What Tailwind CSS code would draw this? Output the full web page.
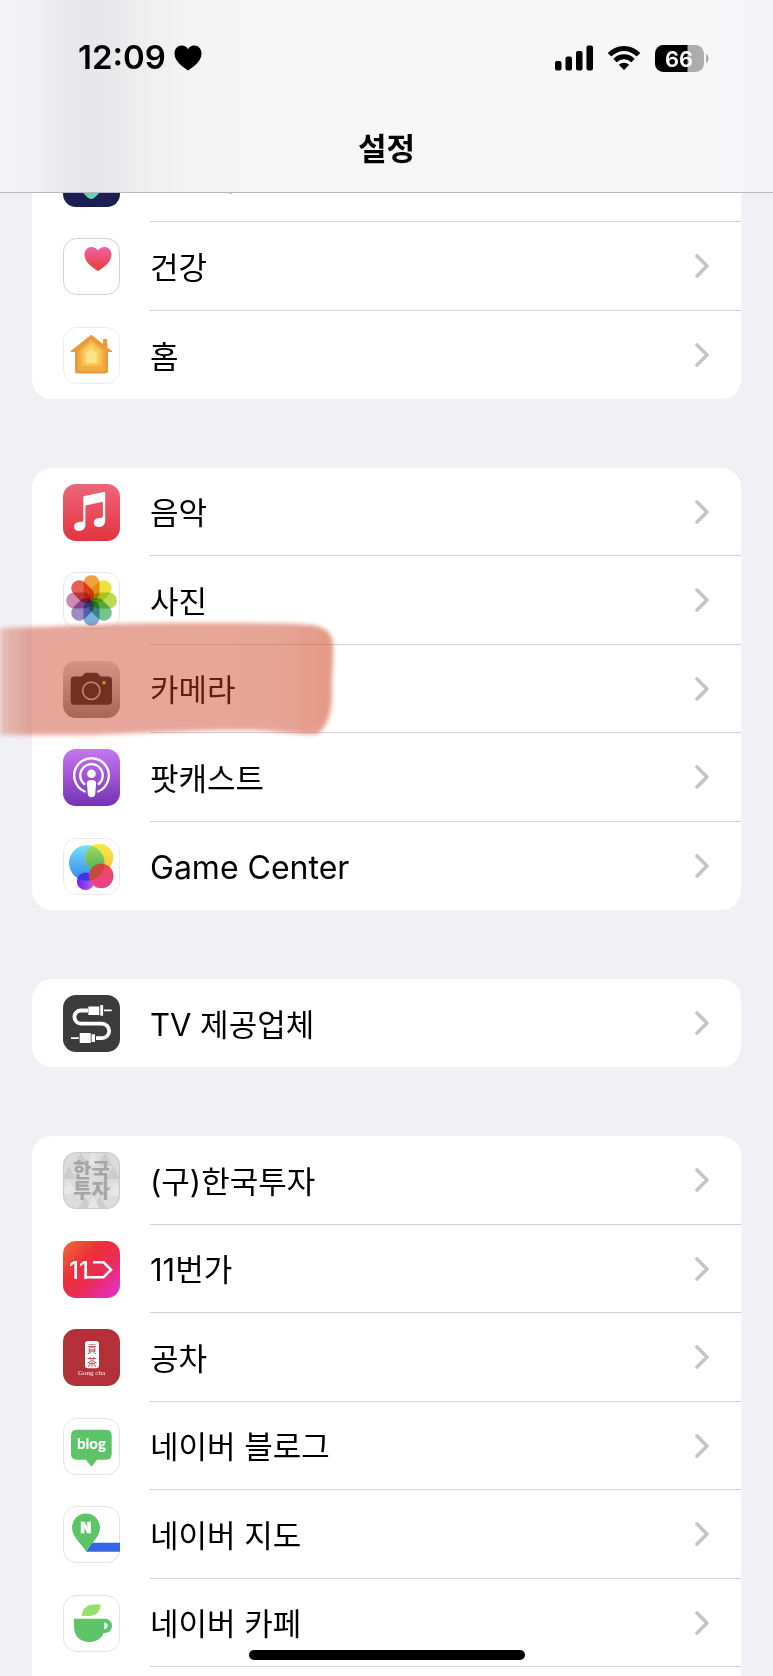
<!DOCTYPE html>
<html lang="ko">
<head>
  <meta charset="UTF-8" />
  <meta name="viewport" content="width=device-width, initial-scale=1" />
  <title>설정</title>
  <script src="https://cdn.jsdelivr.net/npm/@tailwindcss/browser@4"></script>
</head>

<body class="relative flex h-screen flex-col overflow-hidden bg-[#f0f0f5] font-[Inter,'Noto_Sans_CJK_KR',sans-serif] text-[31px] text-black">

  <!-- Shared symbols -->
  <svg class="hidden">
    <symbol id="chevron" viewBox="0 0 14 24">
      <path d="M2 2l10 10L2 22" fill="none" stroke="#c5c5c7" stroke-width="3.6" stroke-linecap="round" stroke-linejoin="round" />
    </symbol>
  </svg>

  <!-- Header -->
  <header class="flex h-[193px] shrink-0 flex-col border-b border-[#b9b9bd] bg-[#f7f7f8] bg-[linear-gradient(to_right,#f4f4f7_0,#f2f2f5_30px,#e9e9eb_70px,#e7e7e9_100px,#eeeeef_140px,#f3f3f4_180px,#f6f6f6_260px,#f7f7f7_700px,#f4f4f8_773px)]">
    <div class="flex h-[116px] items-center justify-between pr-16 pl-[78px]">
      <div class="flex items-center gap-2 text-[33px] font-semibold">
        <span>12:09</span>
        <svg class="h-[26px] w-[28px]" viewBox="0 0 28 26"><path d="M14 25.500C9 22 .5 16.500 .5 8.500 .5 3.800 3.800 .6 7.700 .6c2.700 0 5 1.400 6.300 3.600C15.300 2 17.600 .6 20.300 .6c3.900 0 7.200 3.200 7.200 7.900 0 8-8.500 13.500-13.500 17z" /></svg>
      </div>
      <div class="flex items-center">
        <svg class="mr-[13px] h-[26px] w-[39px]" viewBox="0 0 39 26">
          <rect x="0" y="16" width="6.500" height="9.500" rx="2" />
          <rect x="10.500" y="11.500" width="6.500" height="14" rx="2" />
          <rect x="21" y="6" width="6.500" height="19.500" rx="2" />
          <rect x="31.500" y=".5" width="6.500" height="25" rx="2" />
        </svg>
        <svg class="mr-[14px] h-[26px] w-[34px]" viewBox="0 0 34 26">
          <path d="M2.500 9.700C10.800 1.300 23.200 1.300 31.500 9.700M8 15.500c5.200-5 12.800-5 18 0" fill="none" stroke="#000" stroke-width="5" />
          <path d="M17 25l-5.200-5.200c2.800-2.700 7.600-2.700 10.400 0z" />
        </svg>
        <svg class="h-[27px] w-[54px]" viewBox="0 0 54 27">
          <clipPath id="batt"><rect width="49" height="27" rx="8.500" /></clipPath>
          <g clip-path="url(#batt)"><rect width="49" height="27" fill="#adadad" /><rect width="32.500" height="27" /></g>
          <path d="M51 9c3.500 1 3.500 8 0 9z" fill="#adadad" />
          <text x="24" y="21.500" text-anchor="middle" font-size="22" font-weight="600" fill="#fff">66</text>
        </svg>
      </div>
    </div>
    <h1 class="text-center text-[31px] leading-[66px] font-semibold">설정</h1>
  </header>

  <!-- Settings list -->
  <main class="flex min-h-0 flex-1 flex-col gap-[69px] overflow-hidden px-8">

    <ul class="-mt-[59px] shrink-0 rounded-[20px] bg-white">
      <li class="odd:h-[88px] even:h-[89px]">
        <a href="#" class="flex h-full items-center pl-[31px]">
          <svg class="size-[57px] shrink-0" viewBox="0 0 57 57">
            <defs><linearGradient id="sc" x1="0" y1="0" x2="1" y2="1"><stop offset="0" stop-color="#3fa0d8" /><stop offset="1" stop-color="#6fdc9c" /></linearGradient></defs>
            <rect width="57" height="57" rx="13" fill="#1d1e55" />
            <rect x="16" y="21" width="25" height="25" rx="5" transform="rotate(45 28.500 33)" fill="url(#sc)" />
          </svg>
          <span class="ml-[30px] flex h-full flex-1 items-center justify-between border-b border-[#d3d3d6] pr-8"><span class="pt-1">단축어</span> <svg class="h-6 w-[14px]"><use href="#chevron" /></svg></span>
        </a>
      </li>
      <li class="odd:h-[88px] even:h-[89px]">
        <a href="#" class="flex h-full items-center pl-[31px]">
          <svg class="size-[57px] shrink-0" viewBox="0 0 57 57">
            <defs><linearGradient id="ht" x1="0" y1="0" x2="0" y2="1"><stop offset="0" stop-color="#ec62ab" /><stop offset="1" stop-color="#ea3c30" /></linearGradient></defs>
            <rect x=".5" y=".5" width="56" height="56" rx="13" fill="#fff" stroke="#d2d2d4" />
            <path d="M35 33C31 30.500 21.500 24.500 21.500 16.700c0-4.400 3-7.700 6.900-7.700 2.800 0 5.200 1.300 6.600 3.500C36.400 10.300 38.800 9 41.600 9c3.900 0 6.900 3.300 6.900 7.700C48.500 24.500 39 30.500 35 33z" fill="url(#ht)" />
          </svg>
          <span class="ml-[30px] flex h-full flex-1 items-center justify-between border-b border-[#d3d3d6] pr-8"><span class="pt-1">건강</span> <svg class="h-6 w-[14px]"><use href="#chevron" /></svg></span>
        </a>
      </li>
      <li class="odd:h-[88px] even:h-[89px]">
        <a href="#" class="flex h-full items-center pl-[31px]">
          <svg class="size-[57px] shrink-0" viewBox="0 0 57 57">
            <rect x=".5" y=".5" width="56" height="56" rx="13" fill="#fff" stroke="#ededf0" />
            <path d="M28.300 7.700L40 17v-4.200q0-.8.800-.8h2.700q.8 0 .8.800v7.600l4.700 3.700q.8.900-.3.900H45v19.500q0 2-2 2H14q-2 0-2-2V25H8q-1.100 0-.3-.9z" fill="#ea9a3c" />
            <path d="M28.300 12.500L42 23.500v19q0 1.500-1.500 1.500h-24q-1.500 0-1.500-1.500v-19z" fill="#f2ab40" />
            <path d="M28.300 14.500L39 23v15.500q0 1-1 1H19q-1 0-1-1V23z" fill="#f6c04c" />
            <path d="M28.300 17.500L36 24v12q0 1-1 1H22q-1 0-1-1V24z" fill="#f8d162" />
            <path d="M28.300 22L33.500 26.500v9q0 .5-.5.500h-9.500q-.5 0-.5-.5v-9z" fill="#fae387" />
          </svg>
          <span class="ml-[30px] flex h-full flex-1 items-center justify-between pr-8"><span class="pt-1">홈</span> <svg class="h-6 w-[14px]"><use href="#chevron" /></svg></span>
        </a>
      </li>
    </ul>

    <ul class="shrink-0 rounded-[20px] bg-white">
      <li class="odd:h-[88px] even:h-[89px]">
        <a href="#" class="flex h-full items-center pl-[31px]">
          <svg class="size-[57px] shrink-0" viewBox="0 0 57 57">
            <defs><linearGradient id="mu" x1="0" y1="0" x2="0" y2="1"><stop offset="0" stop-color="#ec667a" /><stop offset="1" stop-color="#e3343f" /></linearGradient></defs>
            <rect width="57" height="57" rx="13" fill="url(#mu)" />
            <path d="M20.300 13.500q0-1.200 1.200-1.500L40.800 8q1.400-.2 1.400 1.200v27.500c0 3.500-2.700 6.300-6.400 6.300-3 0-5-1.800-5-4.200 0-2.800 2.200-4.300 5-4.700l2.700-.4q1.400-.3 1.400-1.700V17.800L22.400 21.500v19c0 3.700-2.700 6.500-6.400 6.500-3 0-5-1.800-5-4.300 0-2.700 2.100-4.200 4.900-4.600l2.900-.4q1.500-.3 1.500-1.800z" fill="#fff" />
          </svg>
          <span class="ml-[30px] flex h-full flex-1 items-center justify-between border-b border-[#d3d3d6] pr-8"><span class="pt-1">음악</span> <svg class="h-6 w-[14px]"><use href="#chevron" /></svg></span>
        </a>
      </li>
      <li class="odd:h-[88px] even:h-[89px]">
        <a href="#" class="flex h-full items-center pl-[31px]">
          <svg class="size-[57px] shrink-0" viewBox="0 0 57 57">
            <rect x=".5" y=".5" width="56" height="56" rx="13" fill="#fff" stroke="#e6e6e9" />
            <g class="isolate *:mix-blend-multiply">
              <rect x="20.500" y="3.200" width="16" height="25.300" rx="7.800" fill="#f0a040" />
              <rect x="20.500" y="3.200" width="16" height="25.300" rx="7.800" fill="#eee33e" transform="rotate(45 28.500 28.500)" />
              <rect x="20.500" y="3.200" width="16" height="25.300" rx="7.800" fill="#b9d957" transform="rotate(90 28.500 28.500)" />
              <rect x="20.500" y="3.200" width="16" height="25.300" rx="7.800" fill="#74c592" transform="rotate(135 28.500 28.500)" />
              <rect x="20.500" y="3.200" width="16" height="25.300" rx="7.800" fill="#7aaede" transform="rotate(180 28.500 28.500)" />
              <rect x="20.500" y="3.200" width="16" height="25.300" rx="7.800" fill="#a08ac3" transform="rotate(225 28.500 28.500)" />
              <rect x="20.500" y="3.200" width="16" height="25.300" rx="7.800" fill="#cf8bb8" transform="rotate(270 28.500 28.500)" />
              <rect x="20.500" y="3.200" width="16" height="25.300" rx="7.800" fill="#e86052" transform="rotate(315 28.500 28.500)" />
            </g>
          </svg>
          <span class="ml-[30px] flex h-full flex-1 items-center justify-between border-b border-[#d3d3d6] pr-8"><span class="pt-1">사진</span> <svg class="h-6 w-[14px]"><use href="#chevron" /></svg></span>
        </a>
      </li>
      <li class="relative odd:h-[88px] even:h-[89px]">
        <a href="#" class="flex h-full items-center pl-[31px]">
          <svg class="size-[57px] shrink-0" viewBox="0 0 57 57">
            <defs><linearGradient id="ca" x1="0" y1="0" x2="0" y2="1"><stop offset="0" stop-color="#dcdcdc" /><stop offset="1" stop-color="#88888a" /></linearGradient></defs>
            <rect width="57" height="57" rx="13" fill="url(#ca)" />
            <path d="M11.500 15.500h6.500q1.200 0 2-1.200l1-1.400q1-1.200 2.500-1.200h9.500q1.500 0 2.500 1.200l1 1.400q.8 1.200 2 1.200h7q3.500 0 3.500 3.500V40q0 3.700-3.500 3.700H11.300Q7.700 43.700 7.700 40V19q0-3.500 3.800-3.500z" fill="#232323" />
            <circle cx="28.300" cy="29.700" r="8.600" fill="none" stroke="#b4b4b4" stroke-width="1.800" />
            <circle cx="41" cy="21.800" r="1.800" fill="#ffd60a" />
          </svg>
          <span class="ml-[30px] flex h-full flex-1 items-center justify-between border-b border-[#d3d3d6] pr-8"><span class="pt-1">카메라</span> <svg class="h-6 w-[14px]"><use href="#chevron" /></svg></span>
        </a>
        <!-- Marker stroke over the row -->
        <svg class="pointer-events-none absolute -top-[34px] -left-8 h-[140px] w-[350px]" viewBox="0 0 350 140">
          <defs>
            <filter id="soft" x="-10%" y="-10%" width="120%" height="120%"><feGaussianBlur stdDeviation="2" /></filter>
            <linearGradient id="ink" x1="0" y1="0" x2="1" y2="0"><stop offset="0" stop-color="#ca3f20" stop-opacity=".28" /><stop offset=".1" stop-color="#ca3f20" stop-opacity=".46" /><stop offset=".8" stop-color="#ca3f20" stop-opacity=".47" /><stop offset="1" stop-color="#c93a1a" stop-opacity=".51" /></linearGradient>
          </defs>
          <path d="M0 17C70 15 120 12 180 12S290 12 312 14C326 16 332 22 333 32C334 52 331 68 332 84C332 104 326 118 317 123C300 124 280 120 250 119C190 118 120 124 70 124L0 124z" fill="url(#ink)" filter="url(#soft)" />
        </svg>
      </li>
      <li class="odd:h-[88px] even:h-[89px]">
        <a href="#" class="flex h-full items-center pl-[31px]">
          <svg class="size-[57px] shrink-0" viewBox="0 0 57 57">
            <defs><linearGradient id="po" x1="0" y1="0" x2="0" y2="1"><stop offset="0" stop-color="#c676f1" /><stop offset="1" stop-color="#7432b3" /></linearGradient></defs>
            <rect width="57" height="57" rx="13" fill="url(#po)" />
            <g fill="none" stroke="#fff" stroke-width="2.300" stroke-linecap="round">
              <path d="M21.800 42.500a17.300 17.300 0 1 1 13.400 0" />
              <path d="M21.300 35a11.200 11.200 0 1 1 14.400 0" />
            </g>
            <circle cx="28.500" cy="24.700" r="4.300" fill="#fff" />
            <path d="M28.500 31c3.200 0 4.700 1 4.600 3.500l-.9 10.500c-.2 2-1.500 3.200-3.700 3.200s-3.500-1.200-3.700-3.200l-.9-10.500c-.1-2.500 1.400-3.500 4.600-3.500z" fill="#fff" />
          </svg>
          <span class="ml-[30px] flex h-full flex-1 items-center justify-between border-b border-[#d3d3d6] pr-8"><span class="pt-1">팟캐스트</span> <svg class="h-6 w-[14px]"><use href="#chevron" /></svg></span>
        </a>
      </li>
      <li class="odd:h-[88px] even:h-[89px]">
        <a href="#" class="flex h-full items-center pl-[31px]">
          <svg class="size-[57px] shrink-0" viewBox="0 0 57 57">
            <defs>
              <linearGradient id="g1" x1="0" y1="0" x2="0" y2="1"><stop offset="0" stop-color="#6fe3f8" /><stop offset="1" stop-color="#3b82f0" /></linearGradient>
              <linearGradient id="g2" x1="0" y1="0" x2="0" y2="1"><stop offset="0" stop-color="#fbe94a" /><stop offset="1" stop-color="#f6c33c" /></linearGradient>
              <linearGradient id="g3" x1="0" y1="0" x2="0" y2="1"><stop offset="0" stop-color="#a8dc5a" /><stop offset="1" stop-color="#43b05c" /></linearGradient>
              <linearGradient id="g4" x1="0" y1="0" x2="1" y2="0"><stop offset="0" stop-color="#6a22f0" /><stop offset="1" stop-color="#c95be8" /></linearGradient>
              <linearGradient id="g5" x1="0" y1="0" x2="0" y2="1"><stop offset="0" stop-color="#ee4a50" /><stop offset="1" stop-color="#ea4090" /></linearGradient>
              <clipPath id="gb"><circle cx="23.800" cy="25" r="17.800" /></clipPath>
            </defs>
            <rect x=".5" y=".5" width="56" height="56" rx="13" fill="#fff" stroke="#ebebee" />
            <circle cx="22.600" cy="43.300" r="8.700" fill="url(#g4)" />
            <circle cx="23.800" cy="25" r="17.800" fill="url(#g1)" />
            <circle cx="36.300" cy="19.800" r="14" fill="url(#g2)" />
            <g clip-path="url(#gb)">
              <circle cx="36.300" cy="19.800" r="14" fill="url(#g3)" />
              <circle cx="22.600" cy="43.300" r="8.700" fill="#3d36e6" />
            </g>
            <circle cx="38.300" cy="38" r="12.200" fill="url(#g5)" />
            <g clip-path="url(#gb)"><circle cx="38.300" cy="38" r="12.200" fill="#c8483f" /></g>
          </svg>
          <span class="ml-[30px] flex h-full flex-1 items-center justify-between pr-8"><span class="pt-1 text-[32px]">Game Center</span> <svg class="h-6 w-[14px]"><use href="#chevron" /></svg></span>
        </a>
      </li>
    </ul>

    <ul class="shrink-0 rounded-[20px] bg-white">
      <li class="odd:h-[88px] even:h-[89px]">
        <a href="#" class="flex h-full items-center pl-[31px]">
          <svg class="size-[57px] shrink-0" viewBox="0 0 57 57">
            <rect width="57" height="57" rx="13" fill="#3b3b3c" />
            <path d="M25 15.500H18a6.600 6.600 0 0 0 0 13.200H39a7.200 7.200 0 0 1 0 14.400H33" fill="none" stroke="#fff" stroke-width="3.800" />
            <path d="M25.300 11.500h11v8.500h-11zM37.300 10h2.800v10.800h-2.800zM41 14.500h7.700v1.800H41zM16.700 38h11v10h-11zM28.500 39.200h3.500v7.800h-3.500zM8 42.200h7.700v1.800H8z" fill="#fff" />
          </svg>
          <span class="ml-[30px] flex h-full flex-1 items-center justify-between pr-8"><span class="pt-1">TV 제공업체</span> <svg class="h-6 w-[14px]"><use href="#chevron" /></svg></span>
        </a>
      </li>
    </ul>

    <ul class="shrink-0 rounded-t-[20px] bg-white">
      <li class="odd:h-[89px] even:h-[88px]">
        <a href="#" class="flex h-full items-center pl-[31px]">
          <svg class="size-[57px] shrink-0" viewBox="0 0 57 57">
            <clipPath id="ki"><rect width="57" height="57" rx="13" /></clipPath>
            <g clip-path="url(#ki)">
              <rect width="57" height="57" fill="#dcdcdc" />
              <path d="M18 0l7 13H11zM42 0l8 14H34zM6 14l7 13H-1zM50 14l8 13H43zM22 45l8 13H14zM37 44l8 14H30z" fill="#cdcdcd" />
              <path d="M30 0l8 13H24zM6 28l8 14H-2zM52 30l8 14H44zM30 44l7 13H24z" fill="#e6e6e6" />
            </g>
            <rect x=".5" y=".5" width="56" height="56" rx="13" fill="none" stroke="#c9c9c9" />
            <text class="font-['Noto_Sans_CJK_KR',sans-serif] font-black" x="28.500" y="26" text-anchor="middle" font-size="20" fill="#a6a6a6">한국</text>
            <text class="font-['Noto_Sans_CJK_KR',sans-serif] font-black" x="28.500" y="46" text-anchor="middle" font-size="20" fill="#a6a6a6">투자</text>
          </svg>
          <span class="ml-[30px] flex h-full flex-1 items-center justify-between border-b border-[#d3d3d6] pr-8"><span class="pt-1">(구)한국투자</span> <svg class="h-6 w-[14px]"><use href="#chevron" /></svg></span>
        </a>
      </li>
      <li class="odd:h-[89px] even:h-[88px]">
        <a href="#" class="flex h-full items-center pl-[31px]">
          <svg class="size-[57px] shrink-0" viewBox="0 0 57 57">
            <defs><linearGradient id="el" x1="0" y1="0" x2="1" y2="1"><stop offset="0" stop-color="#ef6c3a" /><stop offset=".35" stop-color="#ec3138" /><stop offset=".6" stop-color="#ea2d55" /><stop offset="1" stop-color="#e52ee0" /></linearGradient></defs>
            <rect width="57" height="57" rx="13" fill="url(#el)" />
            <text x="6" y="37.500" font-size="24" font-weight="500" fill="#fff">11</text>
            <path d="M23 36.300H40.500L48 28.800 40.500 21.300H30" fill="none" stroke="#fff" stroke-width="2.600" />
          </svg>
          <span class="ml-[30px] flex h-full flex-1 items-center justify-between border-b border-[#d3d3d6] pr-8"><span class="pt-1">11번가</span> <svg class="h-6 w-[14px]"><use href="#chevron" /></svg></span>
        </a>
      </li>
      <li class="odd:h-[89px] even:h-[88px]">
        <a href="#" class="flex h-full items-center pl-[31px]">
          <svg class="size-[57px] shrink-0" viewBox="0 0 57 57">
            <rect width="57" height="57" rx="13" fill="#b23037" />
            <rect x="22" y="12" width="14" height="27.300" rx="3" fill="#fff" />
            <text class="font-['Noto_Sans_CJK_TC',sans-serif]" x="29" y="24" text-anchor="middle" font-size="10" fill="#b23037">貢</text>
            <text class="font-['Noto_Sans_CJK_TC',sans-serif]" x="29" y="36.500" text-anchor="middle" font-size="10" fill="#b23037">茶</text>
            <text class="font-['Liberation_Serif',serif]" x="28.500" y="46" text-anchor="middle" font-size="7" fill="#fff">Gong cha</text>
          </svg>
          <span class="ml-[30px] flex h-full flex-1 items-center justify-between border-b border-[#d3d3d6] pr-8"><span class="pt-1">공차</span> <svg class="h-6 w-[14px]"><use href="#chevron" /></svg></span>
        </a>
      </li>
      <li class="odd:h-[89px] even:h-[88px]">
        <a href="#" class="flex h-full items-center pl-[31px]">
          <svg class="size-[57px] shrink-0" viewBox="0 0 57 57">
            <rect x=".5" y=".5" width="56" height="56" rx="13" fill="#fff" stroke="#e3e3e6" />
            <path d="M14 11.700H43q5.700 0 5.700 5.600V36q0 5.700-5.700 5.700H34l-4.600 6q-.9 1.100-1.800 0L23 41.700H14q-6 0-6-5.700V17.300q0-5.600 6-5.600z" fill="#5dc468" />
            <text class="font-[Lato,sans-serif] font-black" x="28.400" y="31" text-anchor="middle" font-size="15" fill="#fff">blog</text>
          </svg>
          <span class="ml-[30px] flex h-full flex-1 items-center justify-between border-b border-[#d3d3d6] pr-8"><span class="pt-1">네이버 블로그</span> <svg class="h-6 w-[14px]"><use href="#chevron" /></svg></span>
        </a>
      </li>
      <li class="odd:h-[89px] even:h-[88px]">
        <a href="#" class="flex h-full items-center pl-[31px]">
          <svg class="size-[57px] shrink-0" viewBox="0 0 57 57">
            <rect x=".5" y=".5" width="56" height="56" rx="13" fill="#fff" stroke="#e3e3e6" />
            <path d="M29 36.700H57V45.700H23z" fill="#3665e6" />
            <path d="M23 45.700C19 38 9 31.500 9 21.500a14 14 0 0 1 28 0C37 31.500 27 38 23 45.700z" fill="#5dc468" />
            <text x="23" y="26.500" text-anchor="middle" font-size="14" font-weight="900" fill="#fff" stroke="#fff" stroke-width=".6">N</text>
          </svg>
          <span class="ml-[30px] flex h-full flex-1 items-center justify-between border-b border-[#d3d3d6] pr-8"><span class="pt-1">네이버 지도</span> <svg class="h-6 w-[14px]"><use href="#chevron" /></svg></span>
        </a>
      </li>
      <li class="odd:h-[89px] even:h-[88px]">
        <a href="#" class="flex h-full items-center pl-[31px]">
          <svg class="size-[57px] shrink-0" viewBox="0 0 57 57">
            <rect x=".5" y=".5" width="56" height="56" rx="13" fill="#fff" stroke="#e3e3e6" />
            <path d="M19 21c-.5-7 5-11.500 12-11.500h6.700C37.500 17 32.500 21 26 21z" fill="#94e26b" />
            <path d="M11 23.700H42a7 7 0 0 1 0 14.300h-1.500C38.500 43.500 33.500 47 27 47h-1C17 47 11 40.500 11 32z" fill="#5dc468" />
            <path d="M41 27.500c5 0 5 6.500 0 6.500z" fill="#fff" />
          </svg>
          <span class="ml-[30px] flex h-full flex-1 items-center justify-between border-b border-[#d3d3d6] pr-8"><span class="pt-1">네이버 카페</span> <svg class="h-6 w-[14px]"><use href="#chevron" /></svg></span>
        </a>
      </li>
      <li class="h-4"></li>
    </ul>
  </main>

  <!-- Home indicator -->
  <div class="absolute bottom-4 left-1/2 h-[10px] w-[276px] -translate-x-1/2 rounded-full bg-black"></div>

</body>
</html>
